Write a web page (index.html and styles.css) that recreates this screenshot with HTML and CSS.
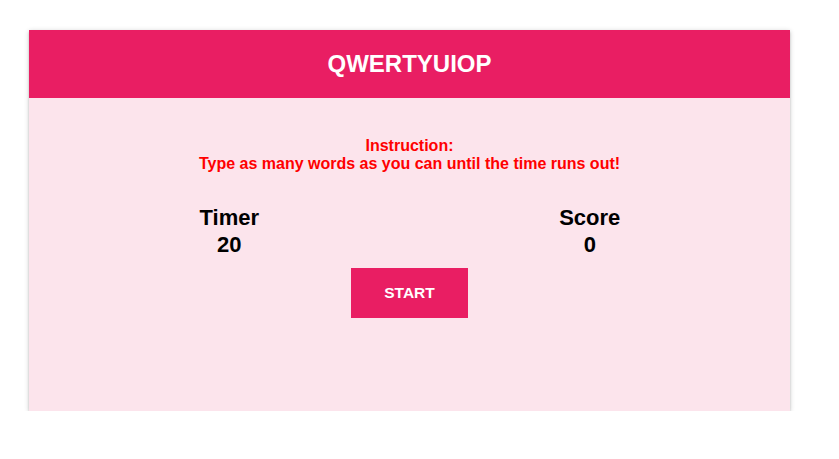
FILE: index.html
```html
<!DOCTYPE html>
<html>
<head>
<meta charset="utf-8">
<link rel="stylesheet" href="styles.css">
</head>
<body>
<div class="card">
  <div class="header">QWERTYUIOP</div>
  <div class="content">
    <div class="instruction">
      <div>Instruction:</div>
      <div>Type as many words as you can until the time runs out!</div>
    </div>
    <div class="stats">
      <div class="stat">
        <div>Timer</div>
        <div>20</div>
      </div>
      <div class="stat">
        <div>Score</div>
        <div>0</div>
      </div>
    </div>
    <div class="actions">
      <button class="start">START</button>
    </div>
  </div>
</div>
</body>
</html>
```
FILE: styles.css
```css
html, body {
  margin: 0;
  padding: 0;
  background: #ffffff;
  font-family: "Liberation Sans", Arial, sans-serif;
}
body {
  padding: 30px 0 0 29px;
}
.card {
  width: 761px;
  background: #fce4ec;
  box-shadow: 0 2px 2px 0 rgba(0,0,0,0.14), 0 3px 1px -2px rgba(0,0,0,0.12), 0 1px 5px 0 rgba(0,0,0,0.2);
}
.header {
  height: 68px;
  background: #e91e63;
  color: #ffffff;
  font-weight: bold;
  font-size: 24px;
  display: flex;
  align-items: center;
  justify-content: center;
}
.content {
  padding: 39px 20px 93px;
}
.instruction {
  color: #ff0000;
  font-weight: bold;
  font-size: 16px;
  line-height: 18px;
  text-align: center;
}
.stats {
  display: grid;
  grid-template-columns: 1fr 1fr;
  margin-top: 31px;
}
.stat {
  text-align: center;
  font-weight: bold;
  font-size: 22px;
  line-height: 27px;
  color: #000000;
}
.actions {
  display: flex;
  justify-content: center;
  margin-top: 10px;
}
.start {
  width: 117px;
  height: 50px;
  border: none;
  background: #e91e63;
  color: #ffffff;
  font-family: "Liberation Sans", Arial, sans-serif;
  font-weight: bold;
  font-size: 15.5px;
  padding: 0;
}
```
